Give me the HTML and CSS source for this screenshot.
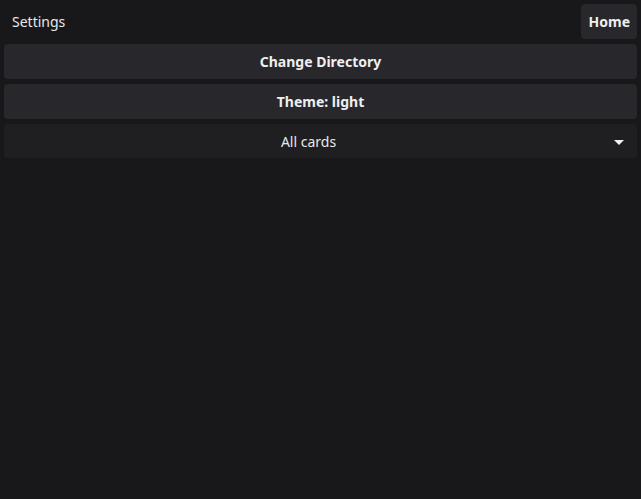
FILE: index.html
```html
<!DOCTYPE html>
<html>
<head>
<meta charset="utf-8">
<link rel="stylesheet" href="styles.css">
</head>
<body>
<div class="app">
  <header class="topbar">
    <span class="title">Settings</span>
    <button class="btn home">Home</button>
  </header>
  <div class="list">
    <button class="btn wide">Change Directory</button>
    <button class="btn wide">Theme: light</button>
    <div class="select">
      <span class="select-label">All cards</span>
      <svg class="caret" width="10" height="5" viewBox="0 0 10 5"><path d="M0 0 H10 L5 5 Z" fill="#f2f2f2"/></svg>
    </div>
  </div>
</div>
</body>
</html>
```
FILE: styles.css
```css
html, body {
  margin: 0;
  padding: 0;
  background: #18181a;
  height: 100%;
}
body {
  font-family: "Noto Sans", "Open Sans", sans-serif;
  color: #ececec;
  font-size: 14px;
}
.app {
  padding: 4px 4px 4px 4px;
}
.topbar {
  display: flex;
  align-items: center;
  justify-content: space-between;
  height: 35px;
}
.title {
  padding-left: 8px;
  font-size: 14px;
  color: #e8e8e8;
}
.btn {
  font-family: inherit;
  font-size: 14px;
  font-weight: 700;
  color: #efefef;
  background: #27272c;
  border: none;
  border-radius: 4px;
  cursor: pointer;
}
.home {
  height: 35px;
  padding: 0 7px 0 8px;
}
.list {
  display: flex;
  flex-direction: column;
  gap: 5px;
  margin-top: 5px;
}
.wide {
  width: 100%;
  height: 35px;
}
.select {
  position: relative;
  height: 34px;
  background: #1f1f21;
  border-radius: 4px;
  display: flex;
  align-items: center;
  justify-content: center;
  padding-right: 24px;
}
.select-label {
  color: #e8e8e8;
}
.caret {
  position: absolute;
  right: 13px;
  top: 16px;
}
```
